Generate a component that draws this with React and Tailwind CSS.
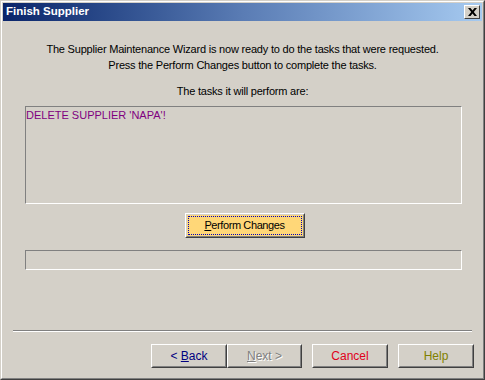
import React from 'react';

const font = { fontFamily: '"Liberation Sans", Arial, sans-serif' };

// classic 3D raised button
const WinButton = ({ children, className = '', focused = false }) => (
  <div className={`border border-t-white border-l-white border-r-[#404040] border-b-[#404040] ${className}`}>
    <div className="h-full border border-t-[#d4d0c8] border-l-[#d4d0c8] border-r-[#808080] border-b-[#808080] p-[1px]">
      <div
        className={`h-full flex items-center justify-center ${
          focused ? 'border border-dotted border-[#0000c0]' : 'border border-transparent'
        }`}
      >
        {children}
      </div>
    </div>
  </div>
);

const Sunken = ({ children, className = '' }) => (
  <div className={`border border-t-[#808080] border-l-[#808080] border-r-white border-b-white ${className}`}>
    {children}
  </div>
);

export default function App() {
  return (
    <div className="w-[485px] h-[380px] bg-[#d4d0c8] text-[11px] text-black" style={font}>
      <div className="w-full h-full border border-t-[#d4d0c8] border-l-[#d4d0c8] border-r-[#404040] border-b-[#404040]">
        <div className="w-full h-full border border-t-white border-l-white border-r-[#808080] border-b-[#808080] p-[1px] flex flex-col">
          {/* Title bar */}
          <div className="h-[18px] flex items-center justify-between bg-gradient-to-r from-[#0a246a] via-[#5a7cb4] to-[#a6caf0] pl-[3px] pr-[2px]">
            <span className="text-white font-bold text-[11.5px] leading-none">Finish Supplier</span>
            <div className="w-[16px] h-[14px] bg-[#d4d0c8] border border-t-white border-l-white border-r-[#404040] border-b-[#404040] flex items-center justify-center">
              <svg width="9" height="8" viewBox="0 0 9 8">
                <path d="M0 0h2.5l2 2.5 2-2.5H9L5.8 4 9 8H6.5l-2-2.5-2 2.5H0l3.2-4z" fill="#000" />
              </svg>
            </div>
          </div>

          {/* Body */}
          <div className="flex-1 flex flex-col">
            <div className="mt-[20px] text-center leading-[16px] tracking-[-0.2px]">
              <p>The Supplier Maintenance Wizard is now ready to do the tasks that were requested.</p>
              <p>Press the Perform Changes button to complete the tasks.</p>
              <p className="mt-[10px]">The tasks it will perform are:</p>
            </div>

            <Sunken className="mt-[7px] ml-[22px] w-[437px] h-[98px]">
              <div className="pl-[0px] pt-[1px] leading-[14px] text-[#800080]">DELETE SUPPLIER 'NAPA'!</div>
            </Sunken>

            <div className="mt-[9px] flex justify-center">
              <WinButton focused className="w-[120px] h-[25px] bg-[#ffd778] ml-[4px]">
                <span className="tracking-[-0.4px]">
                  <span className="underline">P</span>erform Changes
                </span>
              </WinButton>
            </div>

            <Sunken className="mt-[12px] ml-[22px] w-[437px] h-[20px]" />

            <div className="mt-[60px] ml-[10px] w-[459px] border-t border-t-[#808080] border-b border-b-white" />

            <div className="mt-[12px] flex justify-end pr-[8px] text-[12px]">
              <WinButton className="w-[76px] h-[24px]">
                <span className="text-[#000080]">
                  &lt; <span className="underline">B</span>ack
                </span>
              </WinButton>
              <WinButton className="w-[75px] h-[24px]">
                <span className="text-[#808080] [text-shadow:1px_1px_0_#fff]">
                  <span className="underline">N</span>ext &gt;
                </span>
              </WinButton>
              <WinButton className="ml-[10px] w-[76px] h-[24px]">
                <span className="text-[#e0001b]">Cancel</span>
              </WinButton>
              <WinButton className="ml-[10px] w-[76px] h-[24px]">
                <span className="text-[#808000]">Help</span>
              </WinButton>
            </div>
          </div>
        </div>
      </div>
    </div>
  );
}
